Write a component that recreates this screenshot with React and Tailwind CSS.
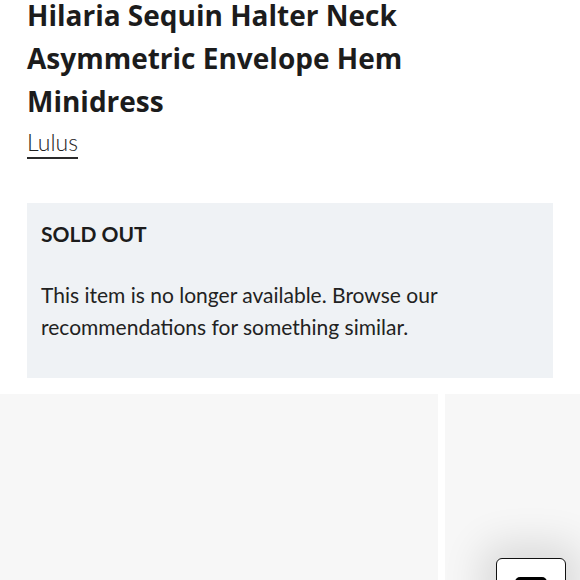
import React from 'react';

// sold-out product page, top of the listing
const App = () => {
  return (
    <div className="relative w-[580px] h-[580px] overflow-hidden bg-white text-[#222] font-['Lato',sans-serif]">
      <div className="px-[27px]">
        <h1 className="-mt-[6px] w-[440px] font-['Open_Sans',sans-serif] text-[28px] leading-[43px] font-bold text-[#1c1c1c]">
          Hilaria Sequin Halter Neck Asymmetric Envelope Hem Minidress
        </h1>
        <a className="inline-block mt-[5px] text-[23px] leading-[28px] font-light text-[#222] border-b-2 border-[#2a2a2a] pb-[1px]">
          Lulus
        </a>
      </div>

      {/* Sold out notice */}
      <div className="mx-[27px] mt-[44px] h-[175px] bg-[#eff2f5] px-[14px] pt-[19px]">
        <div className="text-[21px] leading-[24px] font-bold text-[#1c1c1c]">SOLD OUT</div>
        <p className="mt-[33px] text-[21px] leading-[32px] text-[#222]">
          This item is no longer available. Browse our recommendations for something similar.
        </p>
      </div>

      {/* Photos */}
      <div className="flex gap-[7px] mt-[16px]">
        <div className="w-[438px] h-[200px] shrink-0 bg-[#f7f7f7]"></div>
        <div className="w-[200px] h-[200px] shrink-0 bg-[#f7f7f7]"></div>
      </div>

      {/* floating action */}
      <button className="absolute left-[496px] top-[558px] w-[70px] h-[50px] rounded-[6px] border-[1.5px] border-[#111] bg-white shadow-[0_0_40px_14px_rgba(0,0,0,0.12)]">
        <span className="absolute left-[18px] top-[18px] w-[32px] h-[20px] rounded-[5px] bg-black"></span>
      </button>
    </div>
  );
};

export default App;
